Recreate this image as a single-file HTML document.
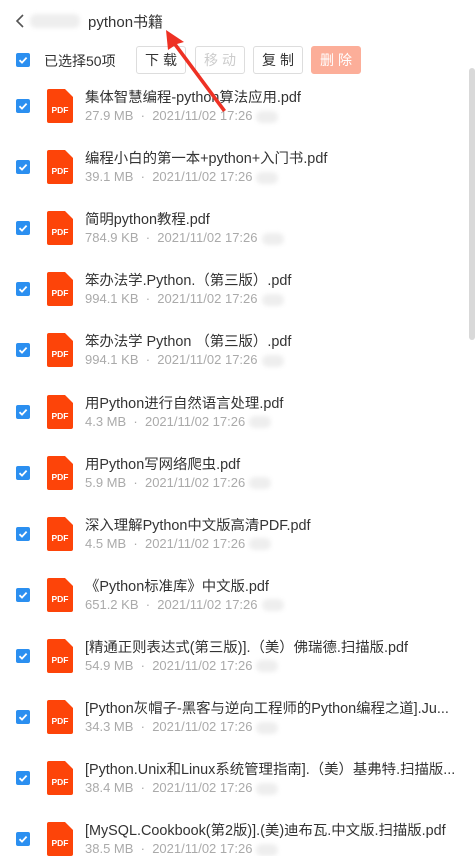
<!DOCTYPE html>
<html><head><meta charset="utf-8"><style>
*{margin:0;padding:0;box-sizing:border-box}
body{width:476px;height:845px;overflow:hidden;background:#fff;font-family:"Liberation Sans","Noto Sans CJK SC",sans-serif;position:relative;color:#333}
.abs{position:absolute}
.cb{position:absolute;left:16px;width:14px;height:14px;background:#2b8ff0;border-radius:2px}
.cb svg{position:absolute;left:0;top:0}
.btn{position:absolute;top:46px;height:28px;width:50px;border:1px solid #ddd;border-radius:3px;font-size:14px;text-align:center;line-height:26px;letter-spacing:4px;text-indent:4px;color:#333}
.row .t{position:absolute;left:85px;font-size:14.4px;color:#333;white-space:nowrap}
.row .m{position:absolute;left:85px;font-size:13px;color:#aaa;white-space:nowrap}
.blur{position:absolute;background:#eee;border-radius:6px;filter:blur(2px)}
.m i{display:inline-block;width:22px;height:12px;background:#eee;border-radius:6px;filter:blur(2px);vertical-align:middle;margin-left:4px}
</style></head><body>
<svg class="abs" style="left:14px;top:13px" width="12" height="16"><path d="M9 2 L3 8 L9 14" stroke="#555" stroke-width="1.6" fill="none"/></svg>
<div class="blur" style="left:30px;top:14px;width:50px;height:14px"></div>
<div class="abs" style="left:88px;top:11px;font-size:15px;color:#333">python书籍</div>

<div class="cb" style="top:53px"><svg width="14" height="14"><path d="M3.5 7.2 L6 9.6 L10.6 4.6" stroke="#fff" stroke-width="1.8" fill="none"/></svg></div>
<div class="abs" style="left:44px;top:51px;font-size:14px;color:#333">已选择50项</div>
<div class="btn" style="left:136px">下载</div>
<div class="btn" style="left:195px;color:#ccc">移动</div>
<div class="btn" style="left:253px">复制</div>
<div class="btn" style="left:311px;background:#fcae99;border-color:#fcae99;color:#fff">删除</div>

<div class="abs" style="left:469px;top:68px;width:6px;height:272px;background:#d9d9d9;border-radius:3px"></div>

<div id="rows"></div>
<script>
var d=[["集体智慧编程-python算法应用.pdf","27.9 MB"],["编程小白的第一本+python+入门书.pdf","39.1 MB"],["简明python教程.pdf","784.9 KB"],["笨办法学.Python.（第三版）.pdf","994.1 KB"],["笨办法学 Python （第三版）.pdf","994.1 KB"],["用Python进行自然语言处理.pdf","4.3 MB"],["用Python写网络爬虫.pdf","5.9 MB"],["深入理解Python中文版高清PDF.pdf","4.5 MB"],["《Python标准库》中文版.pdf","651.2 KB"],["[精通正则表达式(第三版)].（美）佛瑞德.扫描版.pdf","54.9 MB"],["[Python灰帽子-黑客与逆向工程师的Python编程之道].Ju...","34.3 MB"],["[Python.Unix和Linux系统管理指南].（美）基弗特.扫描版...","38.4 MB"],["[MySQL.Cookbook(第2版)].(美)迪布瓦.中文版.扫描版.pdf","38.5 MB"]];
var h="";
for(var i=0;i<d.length;i++){var c=106+61.1*i;
h+='<div class="row"><div class="cb" style="top:'+(c-7)+'px"><svg width="14" height="14"><path d="M3.5 7.2 L6 9.6 L10.6 4.6" stroke="#fff" stroke-width="1.8" fill="none"/></svg></div>'+
'<svg class="abs" style="left:47px;top:'+(c-17)+'px" width="26" height="34"><path d="M2 0 H18 L26 8 V32 Q26 34 24 34 H2 Q0 34 0 32 V2 Q0 0 2 0Z" fill="#fd4409"/><text x="13" y="24" font-size="8.5" font-weight="bold" fill="#fff" text-anchor="middle" font-family="Liberation Sans">PDF</text></svg>'+
'<div class="t" style="top:'+(c-20)+'px">'+d[i][0]+'</div>'+
'<div class="m" style="top:'+(c+2)+'px">'+d[i][1]+' &nbsp;·&nbsp; 2021/11/02 17:26<i></i></div></div>';}
document.getElementById("rows").innerHTML=h;
</script>
<svg class="abs" style="left:0;top:0" width="476" height="845"><path d="M166 30 L184 42 L177 44 L226 110 L223 112 L174 46 L168 50 Z" fill="#ee3124"/></svg>
</body></html>
